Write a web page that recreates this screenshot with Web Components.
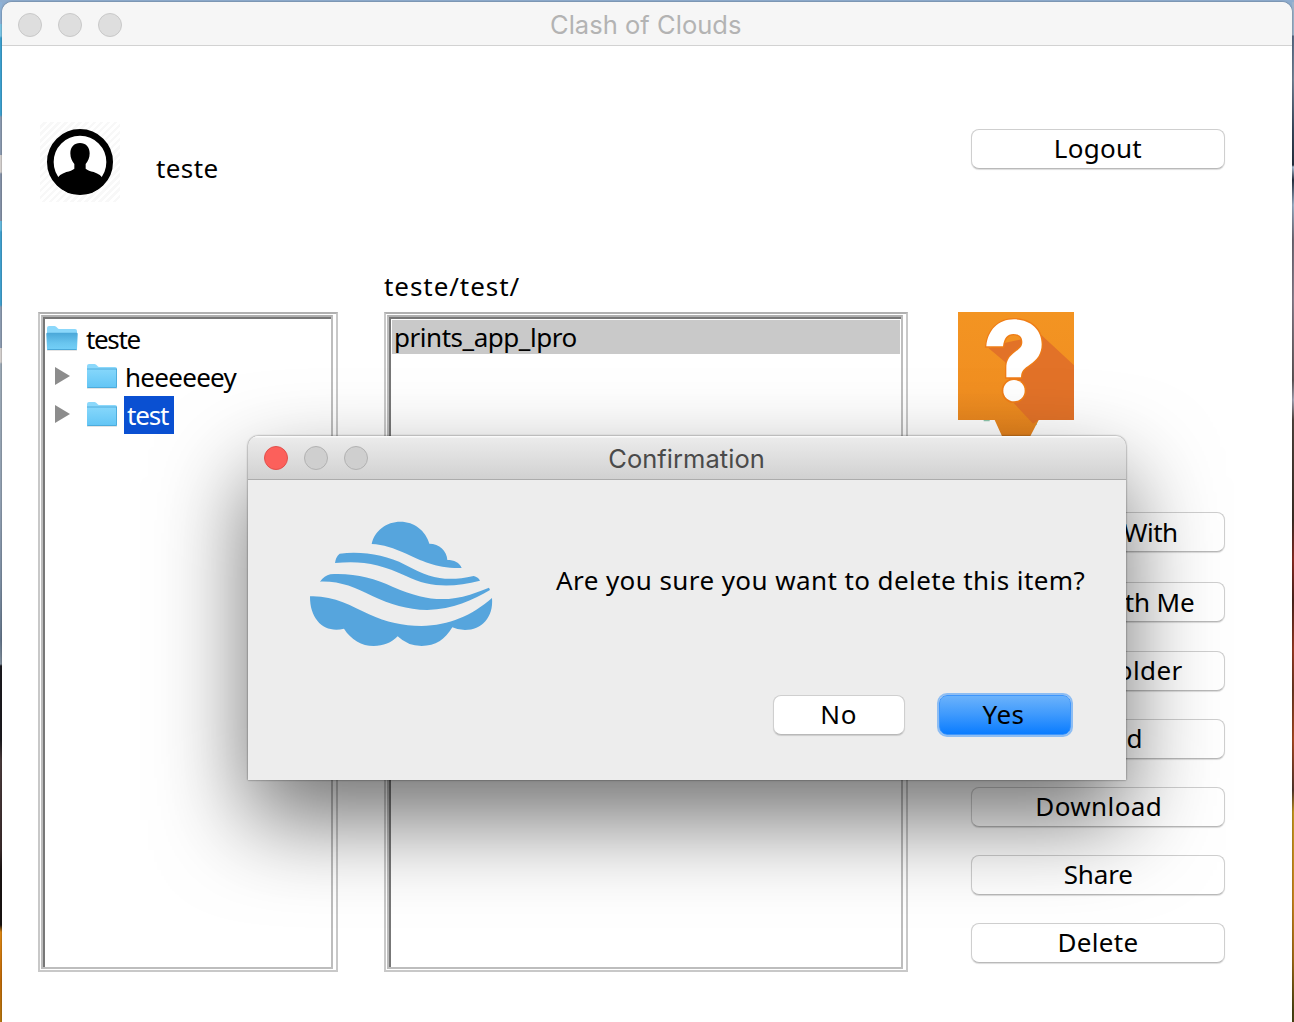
<!DOCTYPE html>
<html lang="en">
<head>
<meta charset="utf-8">
<title>Clash of Clouds</title>
<style>
html,body{margin:0;height:100%;overflow:hidden}
body{font-family:"Noto Sans","Open Sans",sans-serif;font-size:26px;color:#000}
</style>
</head>
<body>
<desk-top></desk-top>
<script>
function define(name, html, after){
  const t=document.createElement('template'); t.innerHTML=html;
  customElements.define(name, class extends HTMLElement{
    connectedCallback(){
      if(this.shadowRoot) return;
      this.attachShadow({mode:'open'}).appendChild(t.content.cloneNode(true));
      if(after) after.call(this,this.shadowRoot);
    }
  });
}
const pen=document.createElement('canvas').getContext('2d');

/* A label whose tracking is adjusted so that its ink spans the "span" attribute in pixels. */
define('ink-label', `<style>:host{display:block;flex:none;white-space:pre;line-height:34px;height:36px}span{display:block}</style><span><slot></slot></span>`, function(root){
  const cs=getComputedStyle(this), s=this.textContent, w=+this.getAttribute('span');
  pen.font=cs.fontWeight+' '+cs.fontSize+' '+cs.fontFamily;
  const m=pen.measureText(s), ink=m.actualBoundingBoxLeft+m.actualBoundingBoxRight;
  root.querySelector('span').style.cssText='letter-spacing:'+((w-ink)/(s.length-1)).toFixed(3)+'px;margin-left:'+m.actualBoundingBoxLeft.toFixed(2)+'px';
  this.style.width=w+'px';
});

define('window-dots', `<style>
:host{display:flex;gap:16px;flex:none;padding-top:var(--drop,1px)}
i{box-sizing:border-box;width:24px;height:24px;border-radius:50%;border:1px solid var(--ring,#c9c9c9);background:var(--dot,#dedede)}
i:first-of-type{background:var(--first,var(--dot,#dedede));border-color:var(--first-ring,var(--ring,#c9c9c9))}
</style><i></i><i></i><i></i>`);

define('title-bar', `<style>
:host{display:grid;grid-template-columns:1fr auto 1fr;align-items:center;box-sizing:border-box;height:44px;padding:0 17px 0 16px;font-family:Inter,Roboto,sans-serif;font-size:25.5px;background:var(--bar,#f6f6f6);border-bottom:1px solid var(--line,#d2d2d2);color:var(--ink,#b3b3b3)}
::slotted(ink-label){margin-top:5px}
</style><window-dots></window-dots><slot></slot><b></b>`);

define('push-button', `<style>
:host{display:flex;align-items:center;justify-content:center;box-sizing:border-box;width:254px;height:40px;flex:none;padding-left:1px;border:1px solid #cfcfcf;border-bottom-color:#b9b9b9;border-radius:8px;background:#fff;box-shadow:0 1px 1px rgba(0,0,0,.14)}
:host([primary]){border:1px solid #3f96fb;background:linear-gradient(#6bb2fb,#3d99fd 50%,#0a7cff);box-shadow:0 0 0 2px #8dbdf3}
</style><slot></slot>`);

define('sunken-panel', `<style>
:host{display:flex;box-sizing:border-box;height:660px;flex:none;border:2px solid #c8c8c8;border-top-color:#b0b0b0;padding:1px 3px 1px 1px;background:#fff}
.a{flex:1;display:flex;border:2px solid #bdbdbd;border-top-color:#b0b0b0}
.b{flex:1;border-left:2px solid #777;border-top:2px solid #777;padding:1px}
</style><div class="a"><div class="b"><slot></slot></div></div>`);

define('folder-icon', `<style>:host{display:block;width:32px;height:27px;flex:none}svg{display:block}.o{display:none}:host([open]) .o{display:block}:host([open]) .c{display:none}</style>
<svg width="32" height="27" viewBox="0 0 32 27"><defs><linearGradient id="g" x2="0" y2="1"><stop stop-color="#86d7fb"/><stop offset="1" stop-color="#62c5f5"/></linearGradient><linearGradient id="h" x2="0" y2="1"><stop stop-color="#4aa7d8"/><stop offset=".6" stop-color="#69c5ef"/><stop offset="1" stop-color="#74d0f8"/></linearGradient></defs>
<path d="M1 24.700h30v1.200H1z" fill="#000" opacity=".12"/>
<path d="M1 3q0-2 2-2h5.500q1.500 0 2.500 1.500t2.500 1.500H29q2 0 2 2v18q0 1-1 1H2q-1 0-1-1z" fill="#8bd8fb"/>
<path class="c" d="M1 6h30v18q0 1-1 1H2q-1 0-1-1z" fill="url(#g)"/><path class="c" d="M1 6h30M1.500 24.500h29M30.500 6v18" fill="none" stroke="#4ba9d9" stroke-width=".9"/>
<path class="o" d="M.3 9q0-1.300 1-1.300h29.400q1 0 1 1.300L31 24q0 1-1 1H2q-1 0-1-1z" fill="url(#h)"/><path class="o" d="M1.500 24.500h29" stroke="#4ba9d9"/>
</svg>`);

define('tree-row', `<style>
:host{display:flex;align-items:center;height:38px}
:host([child]){padding-left:9px}
.t{display:none}:host([child]) .t{display:block;margin:-2px 15px 0 0}
::slotted(folder-icon){margin-top:-1px}
.l{display:flex;align-items:center;box-sizing:border-box;height:38px;margin-left:6px;padding:2px 5px 0 3px}
:host(:not([child])) .l{padding-left:2px}
:host([selected]) .l{background:#0a50d2;color:#fff}
</style><svg class="t" width="16" height="18" viewBox="0 0 16 18"><path d="M0 0l15 9-15 9z" fill="#8c8c8c"/></svg><slot name="icon"></slot><div class="l"><slot></slot></div>`);

define('list-row', `<style>:host{display:flex;align-items:center;box-sizing:border-box;height:34px;padding:2px 0 0 4px;background:#c9c9c9}</style><slot></slot>`);

define('user-avatar', `<style>:host{display:block;width:80px;height:80px;background:repeating-linear-gradient(135deg,#fff 0 2.500px,#f8f8f8 2.500px 5px)}svg{display:block}</style>
<svg width="80" height="80" viewBox="0 0 240 240"><defs><clipPath id="c"><circle cx="120" cy="120" r="98"/></clipPath></defs><circle cx="120" cy="120" r="89" fill="#fff" stroke="#000" stroke-width="20"/><g clip-path="url(#c)"><path d="M91 94c0-20 12-31 29-31s29 11 29 31c0 14-5 24-12 32v14c5 5 14 7 24 10 15 5 24 12 30 24l-4 43H53l-4-43c6-12 15-19 30-24 10-3 19-5 24-10v-14c-7-8-12-18-12-32z"/></g></svg>`);

define('help-badge', `<style>:host{display:block;width:116px;height:130px}svg{display:block}</style>
<svg width="116" height="130" viewBox="54 36 348 390"><defs><linearGradient id="o" x2="0" y2="1"><stop stop-color="#f39422"/><stop offset=".6" stop-color="#f18f21"/><stop offset="1" stop-color="#e3811d"/></linearGradient></defs>
<path d="M131 359h18v5h-18zM281 372l12-12-3 16z" fill="#8fc7ae"/>
<path d="M54 36H402V360H296L262 426H194L164 360H54z" fill="url(#o)"/>
<path d="M304 105L402 196V360H296L279 371 222 310 196 187 146 145 190 130z" fill="#e27228"/>
<g fill="none" stroke="#ef7d17" stroke-width="8"><path d="M139 139C143 91 175 58 222 58C270 58 305 87 305 133C305 162 291 179 271 193C251 207 244 212 243 232H199V205C199 181 207 170 225 156C240 145 247 140 247 126C247 110 237 102 220 102C202 102 192 114 189 139Z"/><circle cx="222" cy="272" r="33"/></g>
<g fill="#fff"><path d="M139 139C143 91 175 58 222 58C270 58 305 87 305 133C305 162 291 179 271 193C251 207 244 212 243 232H199V205C199 181 207 170 225 156C240 145 247 140 247 126C247 110 237 102 220 102C202 102 192 114 189 139Z"/><circle cx="222" cy="272" r="32"/></g>
</svg>`);

define('cloud-logo', `<style>:host{display:block;width:220px;height:160px;flex:none}svg{display:block}</style>
<svg width="220" height="160" viewBox="0 0 660 480" fill="#56a5dd">
<path d="M245 132C253 92 290 65 331 65C373 65 407 92 418 131C448 131 471 153 472 180C492 180 509 188 515 204C438 206 393 181 349 161C311 145 280 133 245 132Z"/>
<path d="M135 189Q137 171 149 161C219 153 287 165 345 194C423 236 468 246 551 228Q565 232 570 242C490 262 420 264 348 228C270 191 212 181 135 189Z"/>
<path d="M90 245Q103 227 121 223C193 219 250 234 309 261C409 304 467 305 540 284Q572 273 597 263L600 270C548 300 490 328 412 330C350 329 302 313 247 288C194 262 151 243 90 245Z"/>
<path d="M60 289C129 286 185 318 237 343C289 367 339 378 394 378C479 376 545 347 606 294C611 352 575 390 525 390Q503 390 487 382C465 419 437 438 395 438Q353 438 323 409C304 429 280 438 251 438C215 438 183 419 162 386C107 401 59 363 60 289Z"/>
</svg>`);

define('confirm-dialog', `<style>
:host{display:flex;flex-direction:column;box-sizing:border-box;width:878px;height:344px;background:#ededed;border-radius:10px 10px 0 0;box-shadow:0 0 2px rgba(0,0,0,.65),0 40px 90px rgba(0,0,0,.56)}
title-bar{--drop:0px;--bar:linear-gradient(#fafafa 0 1px,#ebebeb 2px,#d1d1d1);--line:#acacac;--ink:#4a4a4a;--dot:#cfcfcf;--ring:#b2b2b2;--first:#fc605b;--first-ring:#e2504c}
title-bar{border-radius:10px 10px 0 0}
.m{display:flex;align-items:flex-start;padding:20px 0 0 42px;height:195px;box-sizing:border-box}
.m ink-label{margin:63px 0 0 46px}
.f{display:flex;justify-content:flex-end;gap:34px;padding:20px 55px 0 0}
.f push-button{width:132px}
.f ink-label{margin-right:1px}
.f [primary] ink-label{margin-right:5px}
</style>
<title-bar><ink-label span="154.500">Confirmation</ink-label></title-bar>
<div class="m"><cloud-logo></cloud-logo><ink-label span="528.500">Are you sure you want to delete this item?</ink-label></div>
<div class="f"><push-button><ink-label span="33.500">No</ink-label></push-button><push-button primary><ink-label span="41">Yes</ink-label></push-button></div>`);

define('app-window', `<style>
:host{display:flex;flex-direction:column;flex:1;background:#fff;border-radius:10px 10px 0 0;box-shadow:0 0 2px rgba(0,0,0,.5)}
title-bar{--drop:2px;border-radius:10px 10px 0 0;padding-right:18px}
header{display:flex;align-items:flex-start;padding:76px 67px 0 38px;height:182px;box-sizing:border-box}
.user{margin:29px auto 0 36px}
header push-button{margin-top:7px}
.p{padding:41px 0 0 382px;height:84px;box-sizing:border-box}
main{display:flex;align-items:flex-start;padding-left:36px}
.tree{width:300px;margin-right:46px}
.list{width:524px;margin-right:50px}
.side{display:flex;flex-direction:column}
.btns{display:flex;flex-direction:column;gap:28px;padding:70px 0 0 13px}
.btns push-button:nth-child(1){margin-bottom:2px;padding-top:2px}
.btns push-button:nth-child(2){margin-bottom:1px;justify-content:flex-end;padding:2px 30px 0 0}
</style>
<title-bar><ink-label span="190">Clash of Clouds</ink-label></title-bar>
<header><user-avatar></user-avatar><ink-label class="user" span="61.500">teste</ink-label><push-button><ink-label span="85.500">Logout</ink-label></push-button></header>
<div class="p"><ink-label span="135.500">teste/test/</ink-label></div>
<main>
<sunken-panel class="tree">
<tree-row><folder-icon slot="icon" open></folder-icon><ink-label span="54.500">teste</ink-label></tree-row>
<tree-row child><folder-icon slot="icon"></folder-icon><ink-label span="110.500">heeeeeey</ink-label></tree-row>
<tree-row child selected><folder-icon slot="icon"></folder-icon><ink-label span="42">test</ink-label></tree-row>
</sunken-panel>
<sunken-panel class="list"><list-row><ink-label span="180.500">prints_app_lpro</ink-label></list-row></sunken-panel>
<div class="side"><help-badge></help-badge>
<div class="btns">
<push-button><ink-label span="155">I Shared With</ink-label></push-button>
<push-button><ink-label span="100">With Me</ink-label></push-button>
<push-button><ink-label span="168">Create Folder</ink-label></push-button>
<push-button><ink-label span="84">Upload</ink-label></push-button>
<push-button><ink-label span="122.500">Download</ink-label></push-button>
<push-button><ink-label span="67.500">Share</ink-label></push-button>
<push-button><ink-label span="78">Delete</ink-label></push-button>
</div></div>
</main>`);

define('desk-top', `<style>
:host{display:flex;box-sizing:border-box;position:relative;width:1294px;height:1022px;overflow:hidden;padding:2px 2px 0;
background:
linear-gradient(#8fadcf,#8fadcf) 0 0/100% 2px no-repeat,
linear-gradient(#8db1d6 0 24px,#7cc8ea 24px 36px,#3da3d3 38px 115px,#8d9db3 117px 155px,#d8d4d2 155px 172px,#8795ab 174px 221px,#66bce2 221px 230px,#41a3d2 232px 305px,#8f9fb4 307px 348px,#d8d4d2 348px 362px,#a0adba 364px,#94a3b5 500px,#7f91a6 580px,#66788d 640px,#8492a0 664px,#1b1a1f 666px 740px,#4b3c3d 760px,#3a2b2b 850px,#191312 870px 925px,#e18a14 932px,#c46c08 980px,#b9780f) 0 0/2px 100% no-repeat,
linear-gradient(#9db4cc 0 35px,#586b86 36px,#77879b 80px,#39485d 130px,#26303f 165px,#b3c7de 167px,#273042 180px,#9fb4cc 205px,#6f6975 240px,#8c8290 300px,#5f5658 380px,#aab 400px,#50443f 420px,#3c2e26 520px,#8d2c22 560px,#4b241c 600px,#9b3b23 650px,#6b3822 690px,#ab4a22 740px,#53362d 790px,#c59720 812px,#c9851f 900px,#a06b17 960px,#4b4413 1010px) 100% 0/2px 100% no-repeat,#8fadcf}
confirm-dialog{position:absolute;left:248px;top:436px}
</style><app-window></app-window><confirm-dialog></confirm-dialog>`);
</script>
</body>
</html>
